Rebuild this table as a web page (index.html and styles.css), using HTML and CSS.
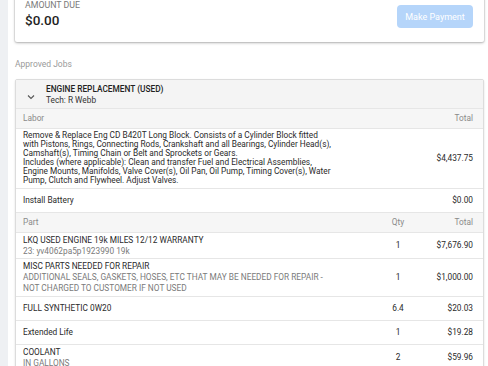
FILE: index.html
```html
<!DOCTYPE html>
<html>
<head>
<meta charset="utf-8">
<link rel="stylesheet" href="styles.css">
</head>
<body>
<div class="layout">
  <aside class="rail"></aside>
  <main class="main">
    <section class="card due">
      <div class="due-info">
        <div class="due-label">AMOUNT DUE</div>
        <div class="due-amount">$0.00</div>
      </div>
      <button class="pay-btn" disabled>Make Payment</button>
    </section>

    <div class="section-label">Approved Jobs</div>

    <section class="card job">
      <header class="job-head">
        <svg class="chev" width="10" height="10" viewBox="0 0 10 10"><path d="M2 3.5 L5 6.5 L8 3.5" fill="none" stroke="#555" stroke-width="1.1"/></svg>
        <div class="job-titles">
          <div class="job-title">ENGINE REPLACEMENT (USED)</div>
          <div class="job-tech">Tech: R Webb</div>
        </div>
      </header>

      <div class="row head labor-grid">
        <div>Labor</div>
        <div class="num">Total</div>
      </div>
      <div class="row labor-grid desc-row">
        <div class="desc">Remove &amp; Replace Eng CD B420T Long Block. Consists of a Cylinder Block fitted<br>with Pistons, Rings, Connecting Rods, Crankshaft and all Bearings, Cylinder Head(s),<br>Camshaft(s), Timing Chain or Belt and Sprockets or Gears.<br>Includes (where applicable): Clean and transfer Fuel and Electrical Assemblies,<br>Engine Mounts, Manifolds, Valve Cover(s), Oil Pan, Oil Pump, Timing Cover(s), Water<br>Pump, Clutch and Flywheel. Adjust Valves.</div>
        <div class="num">$4,437.75</div>
      </div>
      <div class="row labor-grid single">
        <div>Install Battery</div>
        <div class="num">$0.00</div>
      </div>

      <div class="row head part-grid">
        <div>Part</div>
        <div class="qty">Qty</div>
        <div class="num">Total</div>
      </div>
      <div class="row part-grid">
        <div>
          <div>LKQ USED ENGINE 19k MILES 12/12 WARRANTY</div>
          <div class="sub">23: yv4062pa5p1923990 19k</div>
        </div>
        <div class="qty">1</div>
        <div class="num">$7,676.90</div>
      </div>
      <div class="row part-grid">
        <div>
          <div>MISC PARTS NEEDED FOR REPAIR</div>
          <div class="sub">ADDITIONAL SEALS, GASKETS, HOSES, ETC THAT MAY BE NEEDED FOR REPAIR -<br>NOT CHARGED TO CUSTOMER IF NOT USED</div>
        </div>
        <div class="qty">1</div>
        <div class="num">$1,000.00</div>
      </div>
      <div class="row part-grid single">
        <div>FULL SYNTHETIC 0W20</div>
        <div class="qty">6.4</div>
        <div class="num">$20.03</div>
      </div>
      <div class="row part-grid single">
        <div>Extended Life</div>
        <div class="qty">1</div>
        <div class="num">$19.28</div>
      </div>
      <div class="row part-grid">
        <div>
          <div>COOLANT</div>
          <div class="sub">IN GALLONS</div>
        </div>
        <div class="qty">2</div>
        <div class="num">$59.96</div>
      </div>
    </section>
  </main>
</div>
</body>
</html>
```

FILE: styles.css
```css
* { box-sizing: border-box; }
html, body { margin: 0; padding: 0; }
body {
  font-family: Roboto, "Liberation Sans", sans-serif;
  color: #2a2a2a;
  background: #fff;
  overflow: hidden;
}
.layout {
  display: flex;
  min-height: 366px;
}
.rail {
  width: 8px;
  flex: none;
  background: #eef0f3;
}
.main {
  flex: 1;
  padding: 0 4px 0 7px;
}
.card {
  background: #fff;
  border-radius: 2px;
  box-shadow: 0 1px 3px rgba(0,0,0,0.28), 0 0 0 1px rgba(0,0,0,0.06);
}
.due {
  margin-top: -10px;
  padding: 9px 11px 12px 10px;
  display: flex;
  justify-content: space-between;
  align-items: flex-start;
}
.due-label {
  font-size: 8.8px;
  line-height: 12px;
  color: #7a7a7a;
}
.due-amount {
  font-size: 13.5px;
  line-height: 19px;
  color: #1f1f1f;
  font-weight: 500;
}
.pay-btn {
  margin-top: 6px;
  width: 76px;
  height: 23px;
  border: none;
  border-radius: 4px;
  background: #b5d5fa;
  color: #fff;
  font-family: Roboto, "Liberation Sans", sans-serif;
  font-size: 9px;
  padding: 0;
}
.section-label {
  margin: 16px 0 9px;
  font-size: 8.5px;
  line-height: 12px;
  color: #9a9a9a;
}
.job {
  border: 1px solid #dcdcdc;
  box-shadow: 0 1px 2px rgba(0,0,0,0.15);
}
.job-head {
  display: flex;
  align-items: center;
  background: #f4f4f4;
  padding: 4px 8px 2px 10px;
  border-bottom: 1px solid #e6e6e6;
}
.chev { margin: 3px 10px 0 0; flex: none; }
.job-title {
  font-size: 8.3px;
  line-height: 11px;
  font-weight: 500;
  color: #222;
}
.job-tech {
  font-size: 8.3px;
  line-height: 11px;
  color: #333;
}
.row {
  display: grid;
  align-items: center;
  padding: 2px 10px 1.5px 7px;
  border-bottom: 1px solid #e6e6e6;
  font-size: 8.3px;
  line-height: 11px;
  color: #2a2a2a;
}
.row.head {
  background: #f6f6f6;
  color: #8a8a8a;
  padding-top: 4px;
  padding-bottom: 4px;
}
.row.single { padding-top: 6px; padding-bottom: 6px; }
.labor-grid { grid-template-columns: 1fr 80px; }
.part-grid { grid-template-columns: 1fr 40px 55px; }
.desc {
  line-height: 9.1px;
  white-space: nowrap;
}
.desc-row { padding-top: 2px; padding-bottom: 2px; }
.num { text-align: right; }
.qty { text-align: center; }
.sub { color: #7a7a7a; }
```
